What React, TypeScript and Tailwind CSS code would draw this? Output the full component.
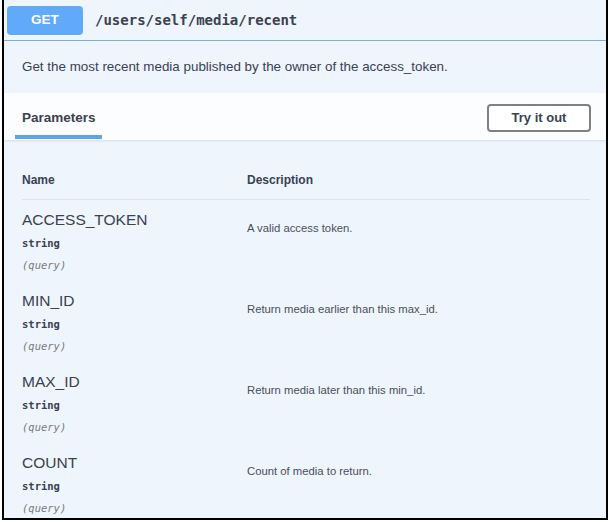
import React from "react";

const params = [
    { name: "ACCESS_TOKEN", desc: "A valid access token." },
    { name: "MIN_ID", desc: "Return media earlier than this max_id." },
    { name: "MAX_ID", desc: "Return media later than this min_id." },
    { name: "COUNT", desc: "Count of media to return." },
];

const sans = "font-['Liberation_Sans',Arial,sans-serif]";
const mono = "font-['DejaVu_Sans_Mono','Liberation_Mono',monospace]";

export default function App() {
    return (
        <div className={`h-[522px] w-[611px] overflow-hidden bg-white ${sans}`}>
            <div className="ml-[2px] flex h-[520px] w-[606px] flex-col overflow-hidden border-x-2 border-b-2 border-black bg-[#eef5fd] text-[#3b4151]">
                {/* operation summary */}
                <div className="flex h-[41px] shrink-0 items-start border-b border-[#7db1c9] pl-[3px] pt-[6px]">
                    <span className="flex h-[29px] w-[76px] items-center justify-center rounded-[4px] bg-[#61a9f9] text-[13.5px] font-bold text-white">
                        GET
                    </span>
                    <span className={`ml-[12px] mt-[5px] text-[14px] font-bold leading-[18px] ${mono}`}>
                        /users/self/media/recent
                    </span>
                </div>

                <div className="flex h-[52px] shrink-0 items-center pl-[18px] text-[13.4px]">
                    Get the most recent media published by the owner of the access_token.
                </div>

                {/* section header */}
                <div className="flex h-[47px] shrink-0 items-stretch justify-between bg-[#fbfdff] shadow-[0_1px_2px_rgba(0,0,0,0.1)]">
                    <div className="ml-[11px] flex w-[87px] flex-col">
                        <span className="pl-[7px] pt-[17px] text-[13.5px] font-bold leading-[16px]">Parameters</span>
                        <span className="mt-auto mb-[1px] h-[4px] w-full bg-[#61a2ea]" />
                    </div>
                    <button className="mr-[15px] mt-[11px] h-[28px] w-[104px] rounded-[4px] border-2 border-[#808080] bg-white text-[13px] font-bold">
                        Try it out
                    </button>
                </div>

                {/* table */}
                <div className="ml-[18px] mr-[16px]">
                    <div className="flex border-b border-[#dde4ec] pb-[12px] pt-[33px] text-[12px] font-bold leading-[14px]">
                        <span className="w-[225px]">Name</span>
                        <span>Description</span>
                    </div>
                    {params.map((p) => (
                        <div key={p.name} className="flex h-[81px]">
                            <div className="w-[225px] pt-[10px]">
                                <div className="text-[15.5px] leading-[20px]">{p.name}</div>
                                <div className={`mt-[6px] text-[10.5px] font-bold leading-[14px] ${mono}`}>string</div>
                                <div className={`mt-[8px] text-[10.5px] italic leading-[14px] text-[#7a7a7a] ${mono}`}>(query)</div>
                            </div>
                            <div className="pt-[20px] text-[11.3px] leading-[16px] text-[#4a4f5c]">{p.desc}</div>
                        </div>
                    ))}
                </div>
            </div>
        </div>
    );
}
